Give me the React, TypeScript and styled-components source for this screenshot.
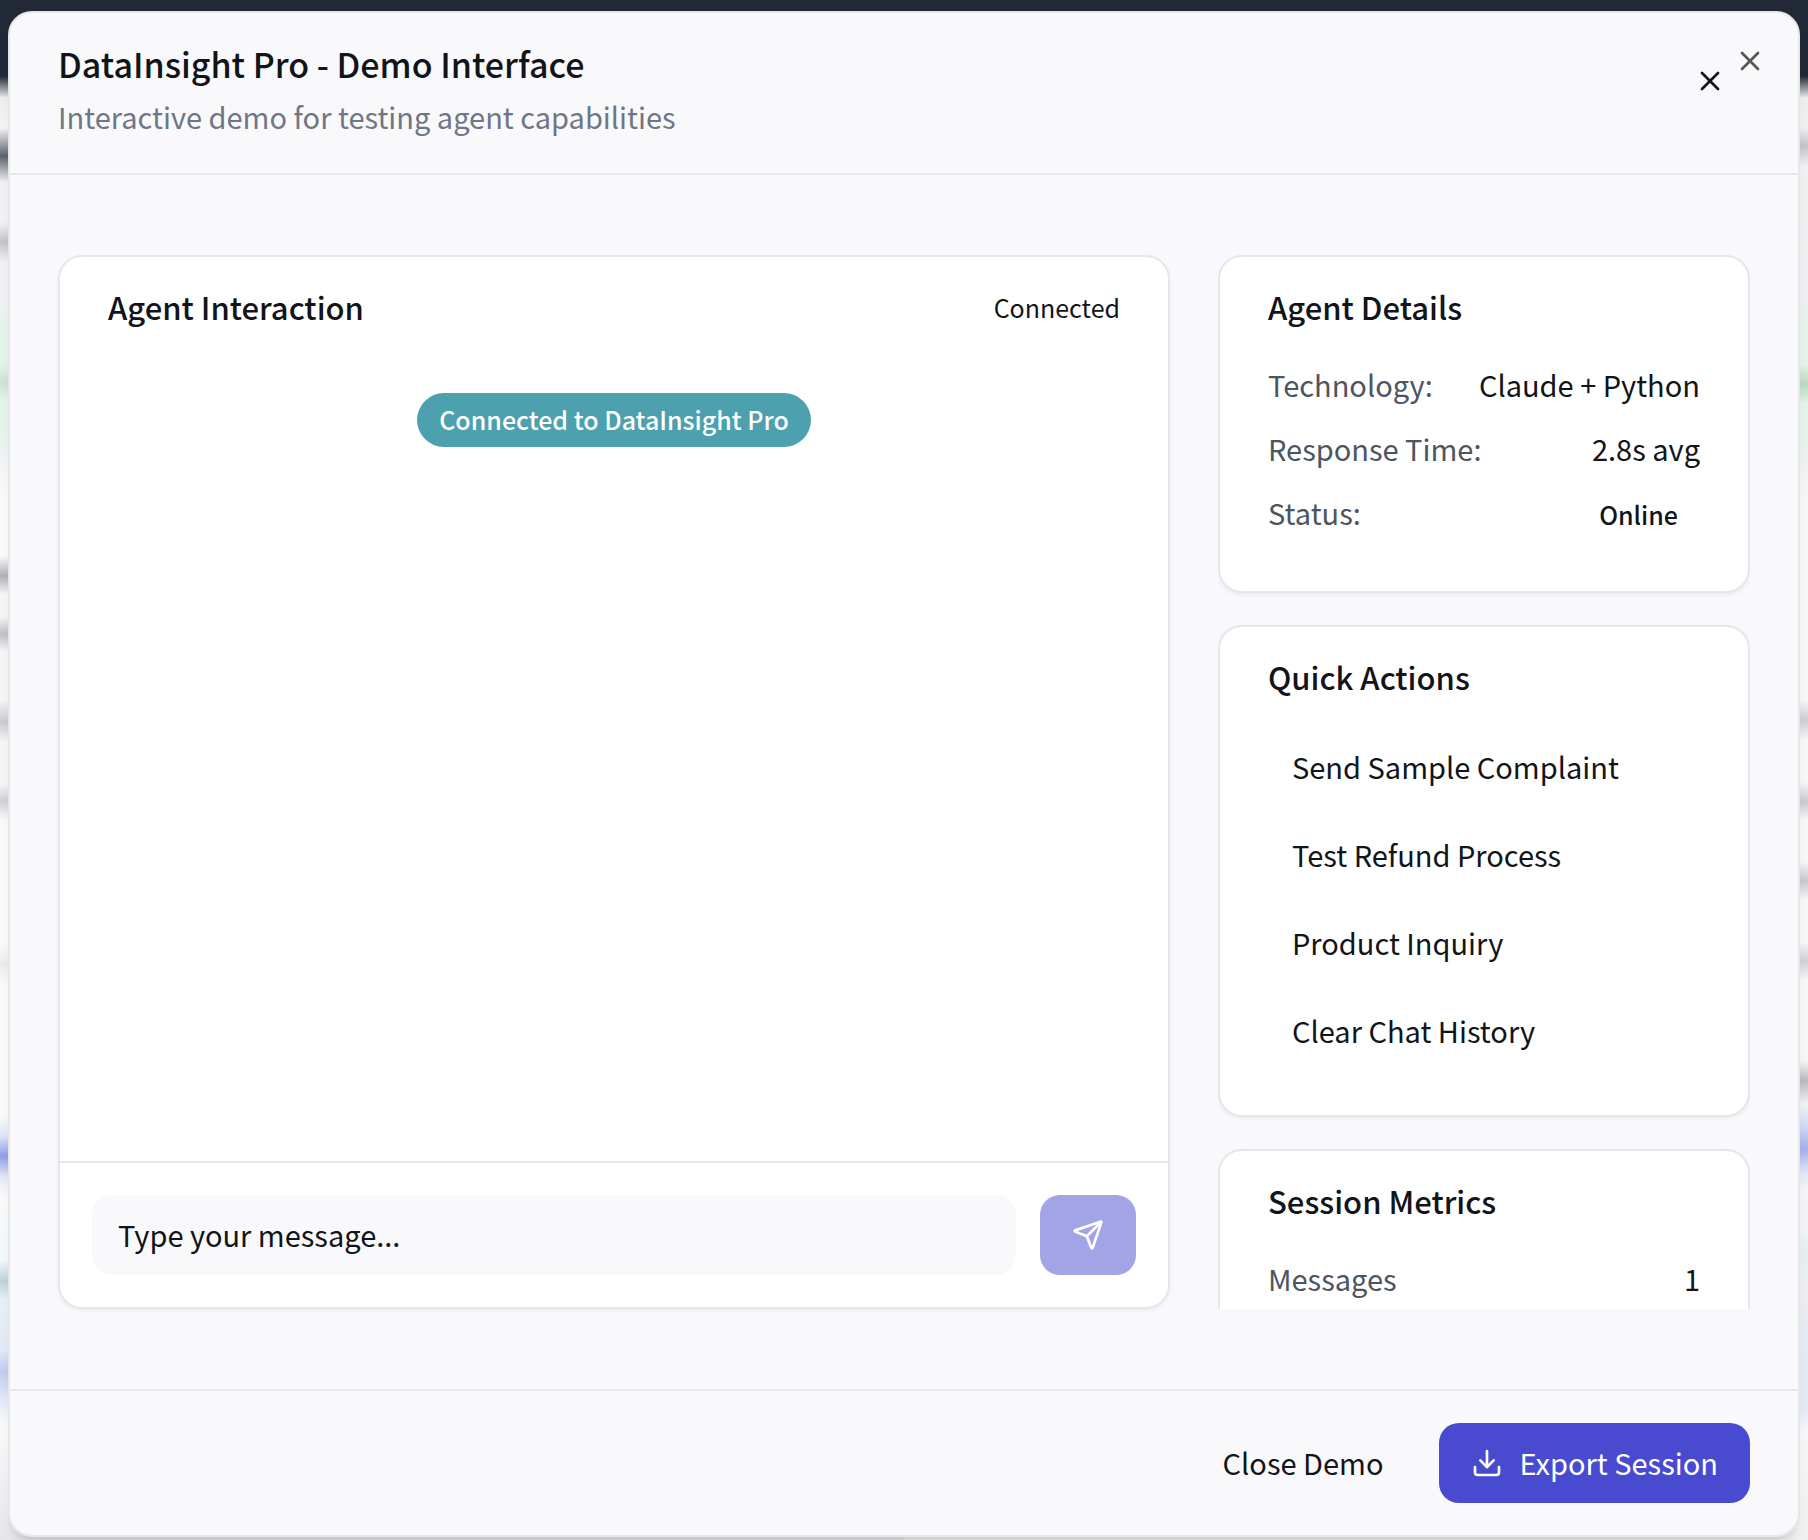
import React, { useState } from 'react';
import styled, { createGlobalStyle, css } from 'styled-components';
import { Download, Send, X } from 'lucide-react';

const color = {
  ink: '#111418',
  muted: '#6f7685',
  label: '#4d5462',
  line: '#e2e8ec',
  surface: '#f9f9fb',
  card: '#ffffff',
  primary: '#484bcf',
  teal: '#4da0ae',
};

const GlobalStyle = createGlobalStyle`
  *, *::before, *::after { box-sizing: border-box; }
  body {
    margin: 0;
    background: #fafafa;
    color: ${color.ink};
    font-family: "Noto Sans CJK SC", "Noto Sans", sans-serif;
    font-size: 29px;
    line-height: 48px;
  }
  h1, h2, p, dl, dt, dd { margin: 0; }
  button, input { font: inherit; color: inherit; }
`;

const leftEdge = `linear-gradient(to bottom,
  #222936 0, #222936 76px, #eeeeef 98px, #f4f4f4 128px, #5d626c 156px, #f1f1f2 182px,
  #f2f3f4 222px, #c3c4c8 242px, #f1f2f3 262px, #f1f2f3 306px, #e6f5ea 322px, #e6f5ea 362px,
  #cfe2d6 382px, #e6f5ea 402px, #e6f5ea 436px, #f2f3f4 456px, #fafafa 500px, #fafafa 556px,
  #afb1b5 576px, #f6f6f6 594px, #f6f6f6 616px, #bfc1c5 634px, #f6f6f6 652px, #f6f6f6 700px,
  #cacbcf 722px, #f6f6f6 742px, #f6f6f6 784px, #cfd0d3 801px, #fafafa 820px, #fafafa 944px,
  #ebebeb 964px, #fafafa 984px, #fafafa 1116px, #dde4f8 1136px, #8e9fe6 1156px, #e6eaf7 1178px,
  #fafafa 1196px, #f3f8f9 1260px, #bcd3da 1281px, #e8f1f5 1300px, #e2e9f7 1350px,
  #c0cdf0 1371px, #e2e9f7 1400px, #fafafa 1424px, #f0f1f2 1480px, #e6e6e8 1540px)`;

const rightEdge = `linear-gradient(to bottom,
  #222936 0, #222936 76px, #eeeeef 98px, #f0f0f1 128px, #c3c4c8 146px, #f1f1f2 166px,
  #eeeff0 306px, #e6f3e9 322px, #e6f3e9 364px, #b8dabf 384px, #e6f3e9 404px, #e6f3e9 440px,
  #eff0f1 456px, #f7f7f7 500px, #f7f7f7 700px, #cdced1 720px, #f7f7f7 740px, #f7f7f7 782px,
  #c8cacf 802px, #f7f7f7 820px, #f7f7f7 862px, #c6c8cd 881px, #f7f7f7 900px, #f7f7f7 942px,
  #d0d1d4 961px, #f7f7f7 980px, #f7f7f7 1060px, #b8babc 1081px, #f2f3f5 1104px,
  #ccd4f3 1130px, #a4b0e9 1149px, #e0e6f6 1172px, #f5f5f6 1190px, #f2f3f5 1230px,
  #e5eff2 1250px, #efeff1 1290px, #e6eaf3 1340px, #e4e9f5 1410px, #f7f7f7 1430px, #f0f0f1 1540px)`;

const Backdrop = styled.div`
  height: 100vh;
  min-height: 900px;
  padding: 11px 8px 3px;
  display: flex;
  background:
    linear-gradient(#222936, #222936) 0 0 / 100% 50px no-repeat,
    ${leftEdge} 0 0 / 50% 100% no-repeat,
    ${rightEdge} 100% 0 / 50% 100% no-repeat;
`;

const Dialog = styled.div`
  position: relative;
  flex: 1;
  min-width: 0;
  display: flex;
  flex-direction: column;
  background: ${color.surface};
  border: 2px solid ${color.line};
  border-radius: 24px;
  box-shadow: 0 10px 12px -6px rgba(0, 0, 0, 0.18);
`;

const Header = styled.header`
  display: flex;
  justify-content: space-between;
  align-items: flex-start;
  padding: 32px 48px;
  border-bottom: 2px solid ${color.line};
`;

const Titles = styled.div`
  display: flex;
  flex-direction: column;
  gap: 8px;
  margin: -1px 0 1px;
`;

const DialogTitle = styled.h1`
  font-size: 34px;
  line-height: 40px;
  font-weight: 500;
`;

const Subtitle = styled.p`
  color: ${color.muted};
`;

const IconButton = styled.button`
  display: flex;
  align-items: center;
  justify-content: center;
  width: 80px;
  height: 72px;
  padding: 0;
  border: 0;
  background: transparent;
  cursor: pointer;
`;

const CornerClose = styled.button`
  position: absolute;
  top: 32px;
  right: 32px;
  display: flex;
  padding: 0;
  border: 0;
  background: transparent;
  color: #000;
  opacity: 0.65;
  cursor: pointer;
`;

const Body = styled.main`
  flex: 1;
  min-height: 0;
  display: grid;
  grid-template-columns: repeat(3, minmax(0, 1fr));
  grid-template-rows: minmax(0, 1fr);
  gap: 48px;
  padding: 80px 48px;
`;

const Card = styled.section`
  flex: none;
  display: flex;
  flex-direction: column;
  background: ${color.card};
  border: 2px solid ${color.line};
  border-radius: 24px;
  box-shadow: 0 2px 4px rgba(0, 0, 0, 0.05);
`;

const ChatCard = styled(Card)`
  grid-column: span 2;
`;

const CardHeader = styled.div`
  display: flex;
  align-items: center;
  justify-content: space-between;
  padding: 30px 48px 33px;
`;

const CardTitle = styled.h2`
  font-size: 31px;
  line-height: 40px;
  font-weight: 500;
`;

const ConnectionState = styled.span`
  font-size: 25px;
  line-height: 40px;
`;

const Messages = styled.div`
  flex: 1;
  min-height: 0;
  display: flex;
  flex-direction: column;
  align-items: center;
  padding: 33px 32px;
`;

const badge = css`
  padding: 6px 22px 8px;
  border-radius: 27px;
  font-size: 25px;
  line-height: 40px;
  font-weight: 500;
`;

const Notice = styled.p`
  ${badge}
  background: ${color.teal};
  color: #fff;
`;

const Composer = styled.form`
  display: flex;
  gap: 24px;
  padding: 32px;
  border-top: 2px solid ${color.line};
`;

const MessageInput = styled.input`
  flex: 1;
  min-width: 0;
  height: 80px;
  padding: 0 26px 2px;
  border: 0;
  border-radius: 20px;
  background: ${color.surface};
  &::placeholder { color: ${color.ink}; opacity: 1; }
`;

const PrimaryButton = styled.button`
  display: flex;
  align-items: center;
  justify-content: center;
  gap: 16px;
  height: 80px;
  padding: 0 32px;
  border: 0;
  border-radius: 20px;
  background: ${color.primary};
  color: #fff;
  cursor: pointer;
  &:disabled { opacity: 0.5; cursor: default; }
`;

const ButtonLabel = styled.span`
  padding-bottom: 2px;
`;

const Side = styled.aside`
  display: flex;
  flex-direction: column;
  gap: 32px;
  overflow: hidden;
`;

const Rows = styled.dl`
  display: flex;
  flex-direction: column;
  gap: 16px;
  padding: 0 48px 49px;
`;

const Row = styled.div`
  display: flex;
  justify-content: space-between;
  dt { color: ${color.label}; }
`;

const StatusBadge = styled.dd`
  ${badge}
`;

const Actions = styled.div`
  display: flex;
  flex-direction: column;
  gap: 16px;
  padding: 1px 48px 48px;
`;

const ActionButton = styled.button`
  height: 72px;
  padding: 0 24px 2px;
  border: 0;
  background: transparent;
  text-align: left;
  cursor: pointer;
`;

const Footer = styled.footer`
  display: flex;
  justify-content: flex-end;
  gap: 24px;
  padding: 32px 48px;
  border-top: 2px solid ${color.line};
`;

const GhostButton = styled.button`
  height: 80px;
  padding: 0 32px 2px;
  border: 0;
  background: transparent;
  cursor: pointer;
`;

const actions = ['Send Sample Complaint', 'Test Refund Process', 'Product Inquiry', 'Clear Chat History'];

export default function App() {
  const [draft, setDraft] = useState('');

  return (
    <>
      <GlobalStyle />
      <Backdrop>
        <Dialog role="dialog" aria-labelledby="demo-title">
          <Header>
            <Titles>
              <DialogTitle id="demo-title">DataInsight Pro - Demo Interface</DialogTitle>
              <Subtitle>Interactive demo for testing agent capabilities</Subtitle>
            </Titles>
            <IconButton type="button" aria-label="Close demo">
              <X size={32} />
            </IconButton>
          </Header>

          <Body>
            <ChatCard>
              <CardHeader>
                <CardTitle>Agent Interaction</CardTitle>
                <ConnectionState>Connected</ConnectionState>
              </CardHeader>
              <Messages>
                <Notice>Connected to DataInsight Pro</Notice>
              </Messages>
              <Composer onSubmit={(e: React.FormEvent) => e.preventDefault()}>
                <MessageInput
                  aria-label="Message"
                  placeholder="Type your message..."
                  value={draft}
                  onChange={(e: React.ChangeEvent<HTMLInputElement>) => setDraft(e.target.value)}
                />
                <PrimaryButton type="submit" aria-label="Send message" disabled={!draft.trim()}>
                  <Send size={32} />
                </PrimaryButton>
              </Composer>
            </ChatCard>

            <Side>
              <Card>
                <CardHeader>
                  <CardTitle>Agent Details</CardTitle>
                </CardHeader>
                <Rows>
                  <Row>
                    <dt>Technology:</dt>
                    <dd>Claude + Python</dd>
                  </Row>
                  <Row>
                    <dt>Response Time:</dt>
                    <dd>2.8s avg</dd>
                  </Row>
                  <Row>
                    <dt>Status:</dt>
                    <StatusBadge>Online</StatusBadge>
                  </Row>
                </Rows>
              </Card>

              <Card>
                <CardHeader>
                  <CardTitle>Quick Actions</CardTitle>
                </CardHeader>
                <Actions>
                  {actions.map((label) => (
                    <ActionButton key={label} type="button">{label}</ActionButton>
                  ))}
                </Actions>
              </Card>

              <Card>
                <CardHeader>
                  <CardTitle>Session Metrics</CardTitle>
                </CardHeader>
                <Rows>
                  <Row>
                    <dt>Messages</dt>
                    <dd>1</dd>
                  </Row>
                </Rows>
              </Card>
            </Side>
          </Body>

          <Footer>
            <GhostButton type="button">Close Demo</GhostButton>
            <PrimaryButton type="button">
              <Download size={32} />
              <ButtonLabel>Export Session</ButtonLabel>
            </PrimaryButton>
          </Footer>

          <CornerClose type="button" aria-label="Close">
            <X size={32} />
          </CornerClose>
        </Dialog>
      </Backdrop>
    </>
  );
}
